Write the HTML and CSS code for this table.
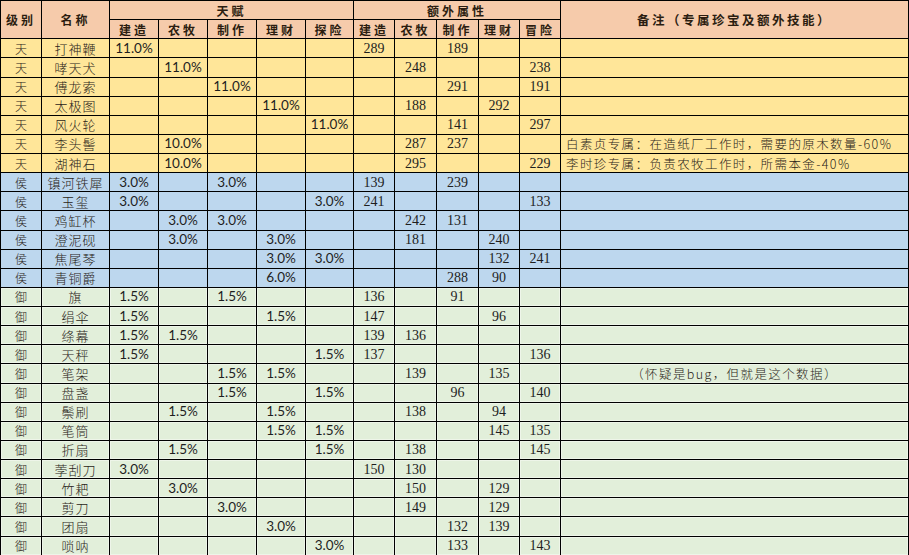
FILE: index.html
```html
<!DOCTYPE html>
<html lang="zh-CN">
<head>
<meta charset="utf-8">
<title>珍宝属性表</title>
<link rel="stylesheet" href="styles.css">
</head>
<body>
<table class="sheet">
  <colgroup>
    <col class="c-lv"><col class="c-name">
    <col class="c-t"><col class="c-t"><col class="c-t"><col class="c-t"><col class="c-t5">
    <col class="c-e"><col class="c-e2"><col class="c-e2"><col class="c-e"><col class="c-e">
    <col class="c-note">
  </colgroup>
  <thead>
    <tr class="hd">
      <th rowspan="2">级别</th>
      <th rowspan="2">名称</th>
      <th colspan="5">天赋</th>
      <th colspan="5">额外属性</th>
      <th rowspan="2" class="note-h">备注（专属珍宝及额外技能）</th>
    </tr>
    <tr class="hd">
      <th>建造</th><th>农牧</th><th>制作</th><th>理财</th><th>探险</th>
      <th>建造</th><th>农牧</th><th>制作</th><th>理财</th><th>冒险</th>
    </tr>
  </thead>
  <tbody>
    <tr class="tian"><td class="lv">天</td><td class="nm">打神鞭</td><td class="p">11.0%</td><td></td><td></td><td></td><td></td><td class="n">289</td><td></td><td class="n">189</td><td></td><td></td><td></td></tr>
    <tr class="tian"><td class="lv">天</td><td class="nm">哮天犬</td><td></td><td class="p">11.0%</td><td></td><td></td><td></td><td></td><td class="n">248</td><td></td><td></td><td class="n">238</td><td></td></tr>
    <tr class="tian"><td class="lv">天</td><td class="nm">傅龙索</td><td></td><td></td><td class="p">11.0%</td><td></td><td></td><td></td><td></td><td class="n">291</td><td></td><td class="n">191</td><td></td></tr>
    <tr class="tian"><td class="lv">天</td><td class="nm">太极图</td><td></td><td></td><td></td><td class="p">11.0%</td><td></td><td></td><td class="n">188</td><td></td><td class="n">292</td><td></td><td></td></tr>
    <tr class="tian"><td class="lv">天</td><td class="nm">风火轮</td><td></td><td></td><td></td><td></td><td class="p">11.0%</td><td></td><td></td><td class="n">141</td><td></td><td class="n">297</td><td></td></tr>
    <tr class="tian"><td class="lv">天</td><td class="nm">李头髻</td><td></td><td class="p">10.0%</td><td></td><td></td><td></td><td></td><td class="n">287</td><td class="n">237</td><td></td><td></td><td class="note">白素贞专属：在造纸厂工作时，需要的原木数量-60%</td></tr>
    <tr class="tian"><td class="lv">天</td><td class="nm">湖神石</td><td></td><td class="p">10.0%</td><td></td><td></td><td></td><td></td><td class="n">295</td><td></td><td></td><td class="n">229</td><td class="note">李时珍专属：负责农牧工作时，所需本金-40%</td></tr>

    <tr class="hou"><td class="lv">侯</td><td class="nm">镇河铁犀</td><td class="p">3.0%</td><td></td><td class="p">3.0%</td><td></td><td></td><td class="n">139</td><td></td><td class="n">239</td><td></td><td></td><td></td></tr>
    <tr class="hou"><td class="lv">侯</td><td class="nm">玉玺</td><td class="p">3.0%</td><td></td><td></td><td></td><td class="p">3.0%</td><td class="n">241</td><td></td><td></td><td></td><td class="n">133</td><td></td></tr>
    <tr class="hou"><td class="lv">侯</td><td class="nm">鸡缸杯</td><td></td><td class="p">3.0%</td><td class="p">3.0%</td><td></td><td></td><td></td><td class="n">242</td><td class="n">131</td><td></td><td></td><td></td></tr>
    <tr class="hou"><td class="lv">侯</td><td class="nm">澄泥砚</td><td></td><td class="p">3.0%</td><td></td><td class="p">3.0%</td><td></td><td></td><td class="n">181</td><td></td><td class="n">240</td><td></td><td></td></tr>
    <tr class="hou"><td class="lv">侯</td><td class="nm">焦尾琴</td><td></td><td></td><td></td><td class="p">3.0%</td><td class="p">3.0%</td><td></td><td></td><td></td><td class="n">132</td><td class="n">241</td><td></td></tr>
    <tr class="hou"><td class="lv">侯</td><td class="nm">青铜爵</td><td></td><td></td><td></td><td class="p">6.0%</td><td></td><td></td><td></td><td class="n">288</td><td class="n">90</td><td></td><td></td></tr>

    <tr class="yu"><td class="lv">御</td><td class="nm">旗</td><td class="p">1.5%</td><td></td><td class="p">1.5%</td><td></td><td></td><td class="n">136</td><td></td><td class="n">91</td><td></td><td></td><td></td></tr>
    <tr class="yu"><td class="lv">御</td><td class="nm">绢伞</td><td class="p">1.5%</td><td></td><td></td><td class="p">1.5%</td><td></td><td class="n">147</td><td></td><td></td><td class="n">96</td><td></td><td></td></tr>
    <tr class="yu"><td class="lv">御</td><td class="nm">绦幕</td><td class="p">1.5%</td><td class="p">1.5%</td><td></td><td></td><td></td><td class="n">139</td><td class="n">136</td><td></td><td></td><td></td><td></td></tr>
    <tr class="yu"><td class="lv">御</td><td class="nm">天秤</td><td class="p">1.5%</td><td></td><td></td><td></td><td class="p">1.5%</td><td class="n">137</td><td></td><td></td><td></td><td class="n">136</td><td></td></tr>
    <tr class="yu"><td class="lv">御</td><td class="nm">笔架</td><td></td><td></td><td class="p">1.5%</td><td class="p">1.5%</td><td></td><td></td><td class="n">139</td><td></td><td class="n">135</td><td></td><td class="note center">（怀疑是bug，但就是这个数据）</td></tr>
    <tr class="yu"><td class="lv">御</td><td class="nm">盘盏</td><td></td><td></td><td class="p">1.5%</td><td></td><td class="p">1.5%</td><td></td><td></td><td class="n">96</td><td></td><td class="n">140</td><td></td></tr>
    <tr class="yu"><td class="lv">御</td><td class="nm">鬃刷</td><td></td><td class="p">1.5%</td><td></td><td class="p">1.5%</td><td></td><td></td><td class="n">138</td><td></td><td class="n">94</td><td></td><td></td></tr>
    <tr class="yu"><td class="lv">御</td><td class="nm">笔筒</td><td></td><td></td><td></td><td class="p">1.5%</td><td class="p">1.5%</td><td></td><td></td><td></td><td class="n">145</td><td class="n">135</td><td></td></tr>
    <tr class="yu"><td class="lv">御</td><td class="nm">折扇</td><td></td><td class="p">1.5%</td><td></td><td></td><td class="p">1.5%</td><td></td><td class="n">138</td><td></td><td></td><td class="n">145</td><td></td></tr>
    <tr class="yu"><td class="lv">御</td><td class="nm">荸刮刀</td><td class="p">3.0%</td><td></td><td></td><td></td><td></td><td class="n">150</td><td class="n">130</td><td></td><td></td><td></td><td></td></tr>
    <tr class="yu"><td class="lv">御</td><td class="nm">竹耙</td><td></td><td class="p">3.0%</td><td></td><td></td><td></td><td></td><td class="n">150</td><td></td><td class="n">129</td><td></td><td></td></tr>
    <tr class="yu"><td class="lv">御</td><td class="nm">剪刀</td><td></td><td></td><td class="p">3.0%</td><td></td><td></td><td></td><td class="n">149</td><td></td><td class="n">129</td><td></td><td></td></tr>
    <tr class="yu"><td class="lv">御</td><td class="nm">团扇</td><td></td><td></td><td></td><td class="p">3.0%</td><td></td><td></td><td></td><td class="n">132</td><td class="n">139</td><td></td><td></td></tr>
    <tr class="yu"><td class="lv">御</td><td class="nm">唢呐</td><td></td><td></td><td></td><td></td><td class="p">3.0%</td><td></td><td></td><td class="n">133</td><td></td><td class="n">143</td><td></td></tr>
  </tbody>
</table>
</body>
</html>
```
FILE: styles.css
```css
html, body {
  margin: 0;
  padding: 0;
  background: #ffffff;
}

.sheet {
  border-collapse: collapse;
  table-layout: fixed;
  width: 908px;
  font-family: "Noto Sans CJK SC", "Noto Sans", sans-serif;
  color: #2a2418;
}

.c-lv { width: 41px; }
.c-name { width: 68px; }
.c-t { width: 49px; }
.c-t5 { width: 48px; }
.c-e { width: 41px; }
.c-e2 { width: 42px; }
.c-note { width: 348px; }

.sheet th,
.sheet td {
  border: 1px solid #000;
  height: 18.14px;
  padding: 0;
  text-align: center;
  vertical-align: middle;
  line-height: 17px;
  white-space: nowrap;
  overflow: hidden;
}

.sheet th {
  background: #f6cbab;
  font-weight: 700;
  font-size: 12px;
  letter-spacing: 3px;
  color: #2b1d10;
}

.sheet th.note-h {
  letter-spacing: 2.5px;
  font-size: 12.5px;
}

.tian td { background: #ffe699; }
.hou td { background: #bdd7ee; }
.yu td {
  background: #e2efda;
  box-shadow: inset 0 0 0 1px #eef5e9;
}

.sheet td.lv {
  font-size: 12px;
  font-weight: 300;
}

.sheet td.nm {
  font-size: 13px;
  font-weight: 300;
  letter-spacing: 1px;
}

.sheet td.p {
  font-family: "Lato", "Liberation Sans", sans-serif;
  font-size: 13.5px;
  color: #1e1e1e;
}

.sheet td.n {
  font-family: "Liberation Serif", serif;
  font-size: 14px;
  color: #1e1e1e;
}

.sheet td.note {
  text-align: left;
  padding-left: 5px;
  font-size: 12.5px;
  font-weight: 300;
  letter-spacing: 1.4px;
}

.sheet td.note.center {
  text-align: center;
  padding-left: 0;
}
```
